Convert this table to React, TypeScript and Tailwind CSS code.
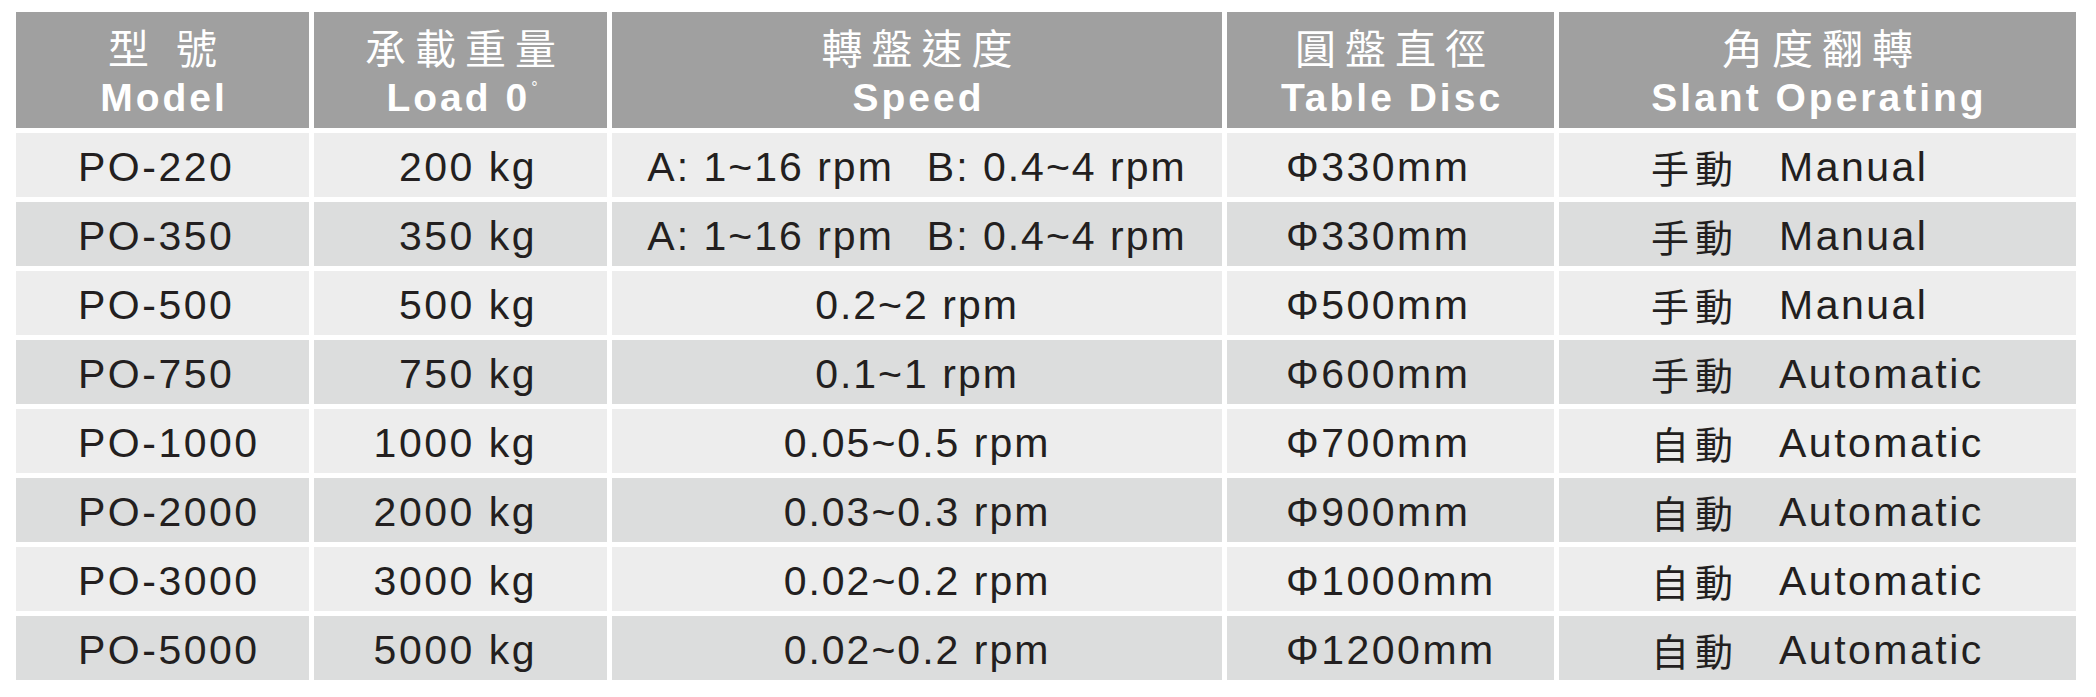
const rows = [
  { model: 'PO-220', load: '200 kg', speed: ['A: 1~16 rpm', 'B: 0.4~4 rpm'], disc: 'Φ330mm', zh: '手動', en: 'Manual' },
  { model: 'PO-350', load: '350 kg', speed: ['A: 1~16 rpm', 'B: 0.4~4 rpm'], disc: 'Φ330mm', zh: '手動', en: 'Manual' },
  { model: 'PO-500', load: '500 kg', speed: ['0.2~2 rpm'], disc: 'Φ500mm', zh: '手動', en: 'Manual' },
  { model: 'PO-750', load: '750 kg', speed: ['0.1~1 rpm'], disc: 'Φ600mm', zh: '手動', en: 'Automatic' },
  { model: 'PO-1000', load: '1000 kg', speed: ['0.05~0.5 rpm'], disc: 'Φ700mm', zh: '自動', en: 'Automatic' },
  { model: 'PO-2000', load: '2000 kg', speed: ['0.03~0.3 rpm'], disc: 'Φ900mm', zh: '自動', en: 'Automatic' },
  { model: 'PO-3000', load: '3000 kg', speed: ['0.02~0.2 rpm'], disc: 'Φ1000mm', zh: '自動', en: 'Automatic' },
  { model: 'PO-5000', load: '5000 kg', speed: ['0.02~0.2 rpm'], disc: 'Φ1200mm', zh: '自動', en: 'Automatic' },
]

const font = "font-['Liberation_Sans','Noto_Sans_CJK_TC',sans-serif]"

function HeadCell({ zh, children }: { zh: string; children: React.ReactNode }) {
  return (
    <div className="bg-[#a0a0a0] text-white flex flex-col items-center pt-[10px]">
      <div className="font-['Noto_Sans_CJK_TC',sans-serif] text-[41px] leading-[48px] tracking-[9px] pl-[9px] whitespace-pre">
        {zh}
      </div>
      <div className={`${font} font-bold text-[39px] leading-[40px] tracking-[3px] pl-[3px] mt-[8px] whitespace-pre`}>
        {children}
      </div>
    </div>
  )
}

export default function App() {
  return (
    <div className={`w-[2096px] h-[697px] bg-white pt-[12px] pl-[16px] ${font}`}>
      <div className="grid grid-cols-[293px_293px_610px_327px_517px] grid-rows-[116px_repeat(8,64px)] gap-[5px]">
        <HeadCell zh="型 號">Model</HeadCell>
        <HeadCell zh="承載重量">
          Load 0<span className="relative -top-[18px] text-[16px] font-normal tracking-normal ml-[1px]">°</span>
        </HeadCell>
        <HeadCell zh="轉盤速度">Speed</HeadCell>
        <HeadCell zh="圓盤直徑">Table Disc</HeadCell>
        <HeadCell zh="角度翻轉">Slant Operating</HeadCell>

        {rows.map((r, i) => {
          const bg = i % 2 === 0 ? 'bg-[#ededed]' : 'bg-[#dcdddd]'
          const txt = 'text-[41px] leading-none tracking-[2.5px] text-[#231f20] pt-[4px]'
          return (
            <div key={r.model} className="contents">
              <div className={`${bg} ${txt} flex items-center pl-[62px]`}>{r.model}</div>
              <div className={`${bg} ${txt} flex items-center justify-end pr-[70px]`}>{r.load}</div>
              <div className={`${bg} ${txt} tracking-[2px] flex items-center justify-center gap-[33px]`}>
                {r.speed.map(s => (
                  <span key={s}>{s}</span>
                ))}
              </div>
              <div className={`${bg} ${txt} flex items-center pl-[59px]`}>{r.disc}</div>
              <div className={`${bg} ${txt} flex items-center pl-[92px]`}>
                <span className="w-[128px] font-['Noto_Sans_CJK_TC',sans-serif] text-[38px] tracking-[6px]">{r.zh}</span>
                <span>{r.en}</span>
              </div>
            </div>
          )
        })}
      </div>
    </div>
  )
}
